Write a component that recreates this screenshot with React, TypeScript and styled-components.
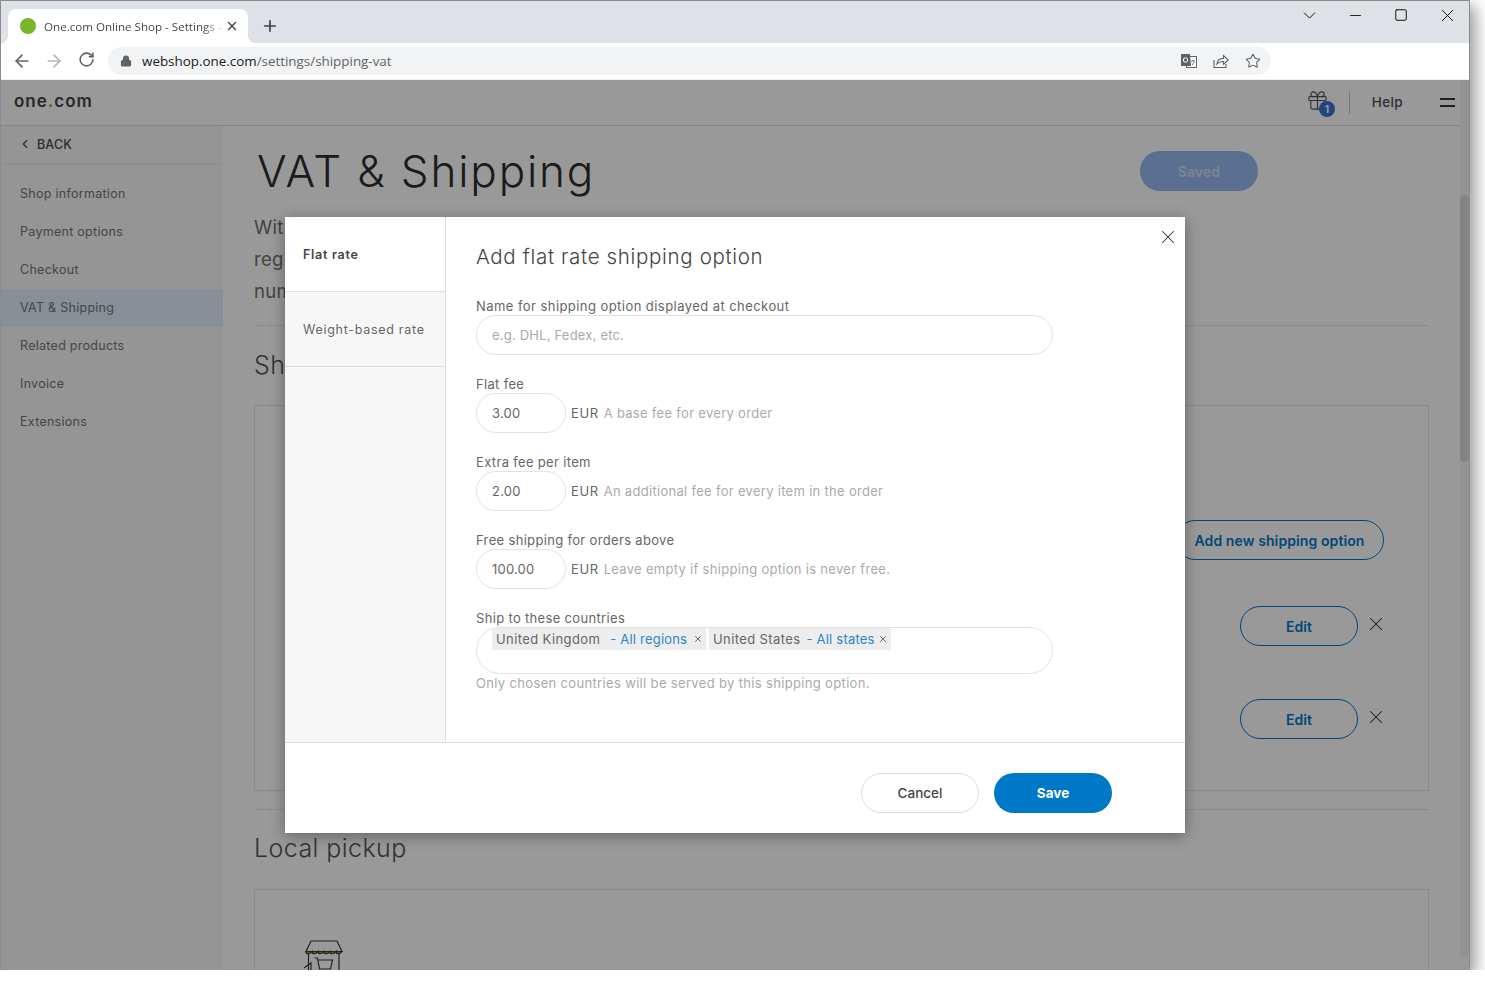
import React from "react";
import styled, { createGlobalStyle } from "styled-components";
import { ArrowLeft, ArrowRight, ChevronDown, ChevronLeft, Gift, Lock, Minus, Plus, RotateCw, Square, Star, X } from "lucide-react";

const GlobalStyle = createGlobalStyle`
  html, body {
    margin: 0;
    padding: 0;
    background: #fff;
    font-family: Inter, "Liberation Sans", sans-serif;
  }
  * { box-sizing: border-box; }
`;

const BrowserWindow = styled.div`
  position: relative;
  width: 1470px;
  height: 970px;
  border: 1px solid #8b8b8b;
  border-bottom: 0;
  overflow: hidden;
  display: flex;
  flex-direction: column;
`;

const Shadow = styled.div`
  width: 1470px;
  height: 970px;
  box-shadow: 6px 6px 14px rgba(0, 0, 0, 0.38);
`;

const TabStrip = styled.div`
  height: 42px;
  flex: none;
  background: #dee1e6;
  display: flex;
  align-items: flex-end;
  padding-left: 7px;
  font-family: "Open Sans", sans-serif;
`;

const Tab = styled.div`
  position: relative;
  width: 240px;
  height: 34px;
  background: #fff;
  border-radius: 8px 8px 0 0;
  display: flex;
  align-items: center;
  padding: 0 9px 0 12px;
  font-size: 11.6px;
  color: #45484d;

  &::after {
    content: "";
    position: absolute;
    right: -8px;
    bottom: 0;
    width: 8px;
    height: 8px;
    background: radial-gradient(circle at 100% 0, transparent 8px, #fff 8.5px);
  }
  &::before {
    content: "";
    position: absolute;
    left: -8px;
    bottom: 0;
    width: 8px;
    height: 8px;
    background: radial-gradient(circle at 0 0, transparent 8px, #fff 8.5px);
  }
`;

const Favicon = styled.span`
  width: 16px;
  height: 16px;
  flex: none;
  border-radius: 50%;
  background: #76b82a;
`;

const TabTitle = styled.span`
  flex: 1;
  margin-left: 8px;
  white-space: nowrap;
  overflow: hidden;
  -webkit-mask-image: linear-gradient(to right, #000 88%, transparent 100%);
  mask-image: linear-gradient(to right, #000 88%, transparent 100%);
`;

const NewTab = styled.span`
  display: flex;
  margin: 0 0 8px 13px;
  color: #3c4043;
`;

const WindowControls = styled.div`
  margin-left: auto;
  margin-right: -1px;
  align-self: flex-start;
  display: flex;
  align-items: center;
  height: 28px;
  color: #111;
`;

const WindowControl = styled.span<{ $w: number }>`
  width: ${(p) => p.$w}px;
  display: flex;
  justify-content: center;
`;

const Toolbar = styled.div`
  height: 37px;
  flex: none;
  background: #fff;
  display: flex;
  align-items: center;
  padding: 0 198px 0 0;
  border-bottom: 1px solid #efefef;
`;

const NavIcon = styled.span<{ $muted?: boolean }>`
  width: 32px;
  display: flex;
  justify-content: center;
  color: ${(p) => (p.$muted ? "#b4b6b9" : "#5f6368")};
`;

const NavIcons = styled.div`
  display: flex;
  padding-left: 5px;
`;

const Omnibox = styled.div`
  margin-left: 6px;
  width: 1163px;
  height: 28px;
  border-radius: 14px;
  background: #f1f3f4;
  display: flex;
  align-items: center;
  padding: 0 10px 0 12px;
  font-family: "Open Sans", sans-serif;
  font-size: 13.4px;
  color: #5f6368;
`;

const Host = styled.span`
  color: #202124;
`;

const UrlText = styled.span`
  margin-left: 10px;
  flex: 1;
`;

const OmniActions = styled.div`
  display: flex;
  align-items: center;
  gap: 16px;
  color: #5f6368;
`;

const Page = styled.div`
  position: relative;
  flex: 1;
  min-height: 0;
  display: flex;
  flex-direction: column;
  background: #fff;
  color: #555;
`;

const AppHeader = styled.header`
  height: 46px;
  flex: none;
  border-bottom: 1px solid #e0e0e0;
  display: flex;
  align-items: center;
  padding: 0 14px 0 13px;
`;

const Logo = styled.div`
  font-size: 17px;
  font-weight: 600;
  letter-spacing: 1px;
  color: #444;
  margin-top: -3px;
`;

const LogoDot = styled.span`
  color: #76b82a;
`;

const HeaderRight = styled.div`
  margin-left: auto;
  display: flex;
  align-items: center;
`;

const GiftWrap = styled.div`
  position: relative;
  display: flex;
  color: #555;
  margin: -4px 20px 0 0;
`;

const Badge = styled.span`
  position: absolute;
  right: -6px;
  bottom: -5px;
  width: 16px;
  height: 16px;
  border-radius: 50%;
  background: #3973d5;
  color: #fff;
  font-size: 10px;
  font-weight: 700;
  display: flex;
  align-items: center;
  justify-content: center;
`;

const HeaderDivider = styled.span`
  width: 1px;
  height: 23px;
  background: #c8c8c8;
`;

const HelpLink = styled.span`
  margin: -2px 0 0 22px;
  font-size: 13.5px;
  font-weight: 500;
  letter-spacing: 0.35px;
  color: #4d4d4d;
`;

const Burger = styled.span`
  margin-left: 37px;
  width: 15px;
  height: 9px;
  border-top: 2px solid #333;
  border-bottom: 2px solid #333;
`;

const Body = styled.div`
  flex: 1;
  min-height: 0;
  display: flex;
`;

const Sidebar = styled.aside`
  width: 222px;
  flex: none;
  background: #f8f8f8;
`;

const BackRow = styled.div`
  height: 39px;
  border-bottom: 1px solid #ececec;
  display: flex;
  align-items: center;
  gap: 5px;
  padding: 0 0 2px 17px;
  font-size: 12.5px;
  font-weight: 500;
  letter-spacing: 0.15px;
  color: #4a4a4a;
`;

const NavList = styled.nav`
  padding-top: 10px;
`;

const NavItem = styled.div<{ $active?: boolean }>`
  height: 38px;
  display: flex;
  align-items: center;
  padding: 0 0 2px 19px;
  font-size: 12.5px;
  letter-spacing: 0.28px;
  color: #757575;
  background: ${(p) => (p.$active ? "#e3eefa" : "transparent")};
`;

const Main = styled.main`
  flex: 1;
  min-width: 0;
  padding: 17px 40px 0 31px;
`;

const TitleRow = styled.div`
  display: flex;
  align-items: center;
  justify-content: space-between;
  height: 56px;
  padding: 0 171px 0 3px;
`;

const PageTitle = styled.h1`
  margin: 0;
  font-size: 44px;
  font-weight: 300;
  letter-spacing: 1.85px;
  color: #2e2e2e;
`;

const SavedButton = styled.span`
  width: 118px;
  height: 40px;
  border-radius: 20px;
  background: #98b9f2;
  color: #ccdcf6;
  font-size: 14px;
  font-weight: 700;
  display: flex;
  align-items: center;
  justify-content: center;
`;

const Intro = styled.p`
  margin: 12px 0 0;
  max-width: 880px;
  font-size: 18.5px;
  line-height: 32px;
  letter-spacing: 0.3px;
  color: #707070;
`;

const Rule = styled.hr<{ $top: number; $bottom: number }>`
  margin: ${(p) => p.$top}px 0 ${(p) => p.$bottom}px;
  border: 0;
  border-top: 1px solid #e8e8e8;
`;

const SectionTitle = styled.h2<{ $after: number }>`
  margin: 0 0 ${(p) => p.$after}px;
  font-size: 25px;
  font-weight: 300;
  line-height: 32px;
  letter-spacing: 0.42px;
  color: #555;
`;

const Card = styled.section`
  border: 1px solid #e4e4e4;
  padding-right: 44px;
`;

const ShippingCard = styled(Card)`
  height: 386px;
  padding-top: 114px;
  display: flex;
  flex-direction: column;
  align-items: flex-end;
`;

const PickupCard = styled(Card)`
  height: 200px;
  padding: 50px 0 0 49px;
  color: #3a3a3a;
`;

const OutlineButton = styled.span<{ $w: number }>`
  width: ${(p) => p.$w}px;
  height: 40px;
  flex: none;
  border: 1px solid #0078c8;
  border-radius: 20px;
  color: #0078c8;
  font-size: 14px;
  font-weight: 600;
  letter-spacing: 0.1px;
  display: flex;
  align-items: center;
  justify-content: center;
`;

const EditRow = styled.div<{ $top: number }>`
  margin: ${(p) => p.$top}px -3px 0 0;
  display: flex;
  align-items: flex-start;
  gap: 7px;
  color: #333;
`;

const RemoveIcon = styled.span`
  display: flex;
  margin-top: 7px;
`;

const Scrollbar = styled.div`
  position: absolute;
  top: 0;
  right: 0;
  bottom: 12px;
  width: 9px;
  border-radius: 0 0 5px 5px;
  background: #f5f5f5;
`;

const ScrollThumb = styled.div`
  position: absolute;
  top: 115px;
  right: 0;
  width: 9px;
  height: 267px;
  border-radius: 5px;
  background: #dcdcdc;
`;

const Overlay = styled.div`
  position: absolute;
  inset: 0;
  background: rgba(0, 0, 0, 0.4);
  display: flex;
  justify-content: center;
  padding-top: 137px;
`;

const Modal = styled.div`
  width: 900px;
  height: 616px;
  background: #fff;
  position: relative;
  box-shadow: 0 3px 14px rgba(0, 0, 0, 0.35);
  display: flex;
  flex-direction: column;
`;

const ModalClose = styled.span`
  position: absolute;
  top: 9px;
  right: 6px;
  display: flex;
  color: #333;
`;

const ModalBody = styled.div`
  flex: 1;
  min-height: 0;
  display: flex;
`;

const Tabs = styled.div`
  width: 161px;
  flex: none;
  background: #f7f7f7;
  border-right: 1px solid #dedede;
`;

const TabItem = styled.div<{ $active?: boolean }>`
  height: 75px;
  border-bottom: 1px solid #dedede;
  padding-left: 18px;
  display: flex;
  align-items: center;
  font-size: 12.5px;
  letter-spacing: 0.72px;
  font-weight: ${(p) => (p.$active ? 600 : 400)};
  color: ${(p) => (p.$active ? "#444" : "#666")};
  background: ${(p) => (p.$active ? "#fff" : "transparent")};
`;

const FormPanel = styled.div`
  flex: 1;
  padding: 27px 30px 0;
`;

const ModalTitle = styled.h3`
  margin: 0 0 27px;
  font-size: 20.5px;
  line-height: 26px;
  font-weight: 300;
  letter-spacing: 0.66px;
  color: #444;
`;

const Field = styled.div`
  margin-bottom: 20px;
`;

const FieldLabel = styled.label<{ $wide?: boolean }>`
  display: block;
  height: 18px;
  font-size: 13px;
  line-height: 18px;
  letter-spacing: ${(p) => (p.$wide ? 0.44 : 0.33)}px;
  color: #666;
`;

const TextInput = styled.input<{ $w: number }>`
  width: ${(p) => p.$w}px;
  height: 40px;
  flex: none;
  border: 1px solid #e2e2e2;
  border-radius: 20px;
  padding: 0 15px;
  font: inherit;
  font-size: 13px;
  letter-spacing: 0.2px;
  color: #666;
  background: #fff;
  outline: none;

  &::placeholder {
    color: #aaa;
  }
`;

const InputRow = styled.div`
  display: flex;
  align-items: center;
`;

const Unit = styled.span`
  margin-left: 5px;
  font-size: 13px;
  letter-spacing: 0.6px;
  color: #666;
`;

const Hint = styled.span`
  margin-left: 5px;
  font-size: 13px;
  letter-spacing: 0.3px;
  color: #aaa;
`;

const TagBox = styled.div`
  width: 577px;
  height: 47px;
  border: 1px solid #e2e2e2;
  border-radius: 24px;
  padding: 0 0 0 15px;
  display: flex;
  align-items: flex-start;
  gap: 3px;
`;

const Tag = styled.span<{ $w: number }>`
  width: ${(p) => p.$w}px;
  height: 22px;
  background: #ededed;
  display: flex;
  align-items: center;
  padding-left: 4px;
  font-size: 13px;
  letter-spacing: 0.4px;
  color: #666;
  white-space: nowrap;
`;

const TagRegion = styled.span<{ $gap: number }>`
  margin-left: ${(p) => p.$gap}px;
  letter-spacing: 0.2px;
  color: #2b87c9;
`;

const TagRemove = styled.span`
  margin-left: auto;
  margin-right: 3px;
  display: flex;
  color: #555;
`;

const FieldHelp = styled.div`
  font-size: 13px;
  line-height: 18px;
  letter-spacing: 0.34px;
  color: #aaa;
`;

const ModalFooter = styled.footer`
  height: 91px;
  flex: none;
  border-top: 1px solid #dedede;
  padding: 30px 73px 0 0;
  display: flex;
  justify-content: flex-end;
  gap: 15px;
`;

const CancelButton = styled.span`
  width: 118px;
  height: 40px;
  border: 1px solid #dcdcdc;
  border-radius: 20px;
  font-size: 13.5px;
  font-weight: 500;
  color: #444;
  display: flex;
  align-items: center;
  justify-content: center;
`;

const SaveButton = styled.span`
  width: 118px;
  height: 40px;
  border-radius: 20px;
  background: #0078c8;
  font-size: 13.5px;
  font-weight: 700;
  color: #fff;
  display: flex;
  align-items: center;
  justify-content: center;
`;

const navItems = ["Shop information", "Payment options", "Checkout", "VAT & Shipping", "Related products", "Invoice", "Extensions"];

const TranslateIcon = () => (
  <svg width="16" height="16" viewBox="0 0 16 16">
    <rect x="5.5" y="3.5" width="10" height="11" fill="#fff" stroke="#5f6368" />
    <path d="M0 1h9l1 12H0z" fill="#5f6368" />
    <circle cx="4.5" cy="7" r="2.2" fill="none" stroke="#fff" strokeWidth="1" />
    <path d="M10 8h4M12 7v1M11 12l2.5-3.5" fill="none" stroke="#5f6368" strokeWidth="0.9" />
  </svg>
);

const ShareIcon = () => (
  <svg width="16" height="16" viewBox="0 0 16 16" fill="none" stroke="currentColor" strokeWidth="1.1">
    <path d="M1 7v7.5h12V11" />
    <path d="M4 11c.3-3.6 3-5.6 6.5-5.6V2.6L15.3 7l-4.8 4.2V8.5C8 8.400 5.600 9 4 11z" />
  </svg>
);

const StoreIcon = () => (
  <svg width="40" height="40" viewBox="0 0 40 40" fill="none" stroke="currentColor" strokeWidth="1.2">
    <path d="M7 1h26l5 10.500H2L7 1z" />
    <path d="M2 11.500c0 3 4 3 6 0 0 3 4 3 6 0 0 3 4 3 6 0 0 3 4 3 6 0 0 3 4 3 6 0 0 3 4 3 6 0z" fill="#76b82a" />
    <path d="M4.500 14v26M35 14v26" />
    <path d="M10.500 18h3l2 11h11l2-9H14" />
    <path d="M0 28l7-5v12" />
  </svg>
);

const App = () => {
  return (
    <Shadow>
      <GlobalStyle />
      <BrowserWindow>
        <TabStrip>
          <Tab>
            <Favicon />
            <TabTitle>One.com Online Shop - Settings - VAT</TabTitle>
            <X size={14} strokeWidth={2.4} />
          </Tab>
          <NewTab>
            <Plus size={18} strokeWidth={2.2} />
          </NewTab>
          <WindowControls>
            <WindowControl $w={46}>
              <ChevronDown size={21} strokeWidth={1.1} />
            </WindowControl>
            <WindowControl $w={46}>
              <Minus size={17} strokeWidth={1.3} />
            </WindowControl>
            <WindowControl $w={46}>
              <Square size={14} strokeWidth={1.7} />
            </WindowControl>
            <WindowControl $w={46}>
              <X size={21} strokeWidth={1.1} />
            </WindowControl>
          </WindowControls>
        </TabStrip>
        <Toolbar>
          <NavIcons>
            <NavIcon>
              <ArrowLeft size={20} strokeWidth={2} />
            </NavIcon>
            <NavIcon $muted>
              <ArrowRight size={20} strokeWidth={2} />
            </NavIcon>
            <NavIcon>
              <RotateCw size={17} strokeWidth={2.2} />
            </NavIcon>
          </NavIcons>
          <Omnibox>
            <Lock size={12} strokeWidth={2.4} fill="currentColor" />
            <UrlText>
              <Host>webshop.one.com</Host>/settings/shipping-vat
            </UrlText>
            <OmniActions>
              <TranslateIcon />
              <ShareIcon />
              <Star size={16} strokeWidth={1.6} />
            </OmniActions>
          </Omnibox>
        </Toolbar>
        <Page>
          <AppHeader>
            <Logo>
              one<LogoDot>.</LogoDot>com
            </Logo>
            <HeaderRight>
              <GiftWrap>
                <Gift size={23} strokeWidth={1.2} />
                <Badge>1</Badge>
              </GiftWrap>
              <HeaderDivider />
              <HelpLink>Help</HelpLink>
              <Burger />
            </HeaderRight>
          </AppHeader>
          <Body>
            <Sidebar>
              <BackRow>
                <ChevronLeft size={14} strokeWidth={2} />
                BACK
              </BackRow>
              <NavList>
                {navItems.map((item) => (
                  <NavItem key={item} $active={item === "VAT & Shipping"}>
                    {item}
                  </NavItem>
                ))}
              </NavList>
            </Sidebar>
            <Main>
              <TitleRow>
                <PageTitle>VAT &amp; Shipping</PageTitle>
                <SavedButton>Saved</SavedButton>
              </TitleRow>
              <Intro>
                With these settings you can manage VAT for your
                <br />
                regions and add your VAT
                <br />
                number.
              </Intro>
              <Rule $top={18} $bottom={23} />
              <SectionTitle $after={24}>Shipping</SectionTitle>
              <ShippingCard>
                <OutlineButton $w={209}>Add new shipping option</OutlineButton>
                <EditRow $top={46}>
                  <OutlineButton $w={118}>Edit</OutlineButton>
                  <RemoveIcon>
                    <X size={22} strokeWidth={1.1} />
                  </RemoveIcon>
                </EditRow>
                <EditRow $top={53}>
                  <OutlineButton $w={118}>Edit</OutlineButton>
                  <RemoveIcon>
                    <X size={22} strokeWidth={1.1} />
                  </RemoveIcon>
                </EditRow>
              </ShippingCard>
              <Rule $top={18} $bottom={22} />
              <SectionTitle $after={25}>Local pickup</SectionTitle>
              <PickupCard>
                <StoreIcon />
              </PickupCard>
            </Main>
          </Body>
          <Scrollbar>
            <ScrollThumb />
          </Scrollbar>
          <Overlay>
            <Modal>
              <ModalClose>
                <X size={22} strokeWidth={1.1} />
              </ModalClose>
              <ModalBody>
                <Tabs>
                  <TabItem $active>Flat rate</TabItem>
                  <TabItem>Weight-based rate</TabItem>
                </Tabs>
                <FormPanel>
                  <ModalTitle>Add flat rate shipping option</ModalTitle>
                  <Field>
                    <FieldLabel $wide>Name for shipping option displayed at checkout</FieldLabel>
                    <TextInput $w={577} placeholder="e.g. DHL, Fedex, etc." readOnly />
                  </Field>
                  <Field>
                    <FieldLabel>Flat fee</FieldLabel>
                    <InputRow>
                      <TextInput $w={90} defaultValue="3.00" readOnly />
                      <Unit>EUR</Unit>
                      <Hint>A base fee for every order</Hint>
                    </InputRow>
                  </Field>
                  <Field>
                    <FieldLabel>Extra fee per item</FieldLabel>
                    <InputRow>
                      <TextInput $w={90} defaultValue="2.00" readOnly />
                      <Unit>EUR</Unit>
                      <Hint>An additional fee for every item in the order</Hint>
                    </InputRow>
                  </Field>
                  <Field>
                    <FieldLabel>Free shipping for orders above</FieldLabel>
                    <InputRow>
                      <TextInput $w={90} defaultValue="100.00" readOnly />
                      <Unit>EUR</Unit>
                      <Hint>Leave empty if shipping option is never free.</Hint>
                    </InputRow>
                  </Field>
                  <FieldLabel>Ship to these countries</FieldLabel>
                  <TagBox>
                    <Tag $w={214}>
                      United Kingdom
                      <TagRegion $gap={10}>- All regions</TagRegion>
                      <TagRemove>
                        <X size={10} strokeWidth={2} />
                      </TagRemove>
                    </Tag>
                    <Tag $w={182}>
                      United States
                      <TagRegion $gap={6}>- All states</TagRegion>
                      <TagRemove>
                        <X size={10} strokeWidth={2} />
                      </TagRemove>
                    </Tag>
                  </TagBox>
                  <FieldHelp>Only chosen countries will be served by this shipping option.</FieldHelp>
                </FormPanel>
              </ModalBody>
              <ModalFooter>
                <CancelButton>Cancel</CancelButton>
                <SaveButton>Save</SaveButton>
              </ModalFooter>
            </Modal>
          </Overlay>
        </Page>
      </BrowserWindow>
    </Shadow>
  );
};

export default App;
